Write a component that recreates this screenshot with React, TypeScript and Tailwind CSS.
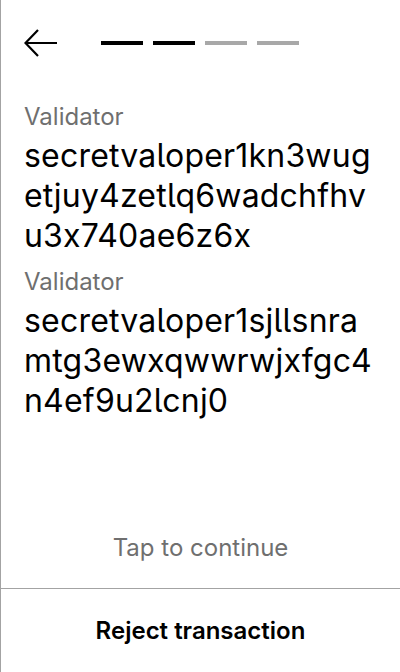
import React from 'react';

// values are split where the device wraps them
const fields = [
  { label: 'Validator', lines: ['secretvaloper1kn3wug', 'etjuy4zetlq6wadchfhv', 'u3x740ae6z6x'] },
  { label: 'Validator', lines: ['secretvaloper1sjllsnra', 'mtg3ewxqwwrwjxfgc4', 'n4ef9u2lcnj0'] },
];

const steps = [true, true, false, false];

const BackArrow = () => (
  <svg width="34" height="30" viewBox="0 0 34 30" fill="none">
    <path d="M33 15H2M14 2L1.5 15L14 28" stroke="#000" strokeWidth="2.2" />
  </svg>
);

export default function App() {
  return (
    <div
      className="flex h-[672px] w-[400px] flex-col border-l border-[#a3a3a3] bg-white text-black"
      style={{ fontFamily: 'Inter, "Noto Sans", sans-serif' }}
    >
      <div className="flex h-[86px] items-center pl-[23px]">
        <BackArrow />
        <div className="ml-[43px] flex gap-[10px]">
          {steps.map((done, i) => (
            <div
              key={i}
              className={done ? 'h-[4px] w-[42px] bg-black' : 'h-[4px] w-[42px] bg-[#a8a8a8]'}
            />
          ))}
        </div>
      </div>

      <div className="flex flex-1 flex-col gap-[10px] px-[23px] pt-[15px]">
        {fields.map((f, i) => (
          <div key={i} className="flex flex-col gap-[3px]">
            <span className="text-[24px] leading-[32px] text-[#6f6f6f]">{f.label}</span>
            <div className="flex flex-col text-[32px] leading-[40px] tracking-[0.2px] [font-feature-settings:'cv05']">
              {f.lines.map((l) => (
                <span key={l} className="whitespace-nowrap">{l}</span>
              ))}
            </div>
          </div>
        ))}
      </div>

      <div className="pb-[24px] text-center text-[24px] leading-[32px] text-[#6f6f6f]">
        Tap to continue
      </div>

      <div className="flex h-[84px] items-center justify-center border-t border-[#a3a3a3]">
        <span className="text-[24px] font-semibold leading-[32px]">Reject transaction</span>
      </div>
    </div>
  );
}
